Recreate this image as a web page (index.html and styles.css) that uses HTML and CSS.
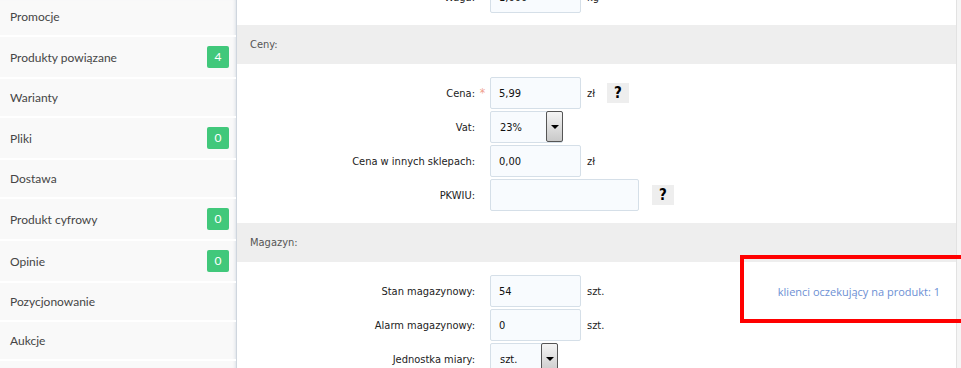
FILE: index.html
```html
<!DOCTYPE html>
<html lang="pl">
<head>
    <meta charset="UTF-8">
    <title>Edycja produktu</title>
    <link rel="stylesheet" href="styles.css">
</head>
<body>
    <aside class="sidebar">
        <ul class="menu">
            <li><a href="#">Promocje</a></li>
            <li class="with-badge"><a href="#">Produkty powiązane</a><span class="badge">4</span></li>
            <li><a href="#">Warianty</a></li>
            <li class="with-badge"><a href="#">Pliki</a><span class="badge">0</span></li>
            <li><a href="#">Dostawa</a></li>
            <li class="with-badge"><a href="#">Produkt cyfrowy</a><span class="badge">0</span></li>
            <li class="with-badge"><a href="#">Opinie</a><span class="badge">0</span></li>
            <li><a href="#">Pozycjonowanie</a></li>
            <li><a href="#">Aukcje</a></li>
        </ul>
    </aside>

    <main class="content">
        <div class="fields top-fields">
            <div class="row">
                <label class="label">Waga:</label>
                <span class="req"></span>
                <input class="input" type="text" value="1,000">
                <span class="unit">kg</span>
            </div>
        </div>

        <div class="section-title">Ceny:</div>
        <div class="fields">
            <div class="row">
                <label class="label">Cena:</label>
                <span class="req">*</span>
                <input class="input" type="text" value="5,99">
                <span class="unit">zł</span>
                <span class="help">?</span>
            </div>
            <div class="row">
                <label class="label">Vat:</label>
                <span class="req"></span>
                <div class="select vat"><span>23%</span><span class="arrow"></span></div>
            </div>
            <div class="row">
                <label class="label">Cena w innych sklepach:</label>
                <span class="req"></span>
                <input class="input" type="text" value="0,00">
                <span class="unit">zł</span>
            </div>
            <div class="row">
                <label class="label">PKWIU:</label>
                <span class="req"></span>
                <input class="input wide" type="text" value="">
                <span class="help help-wide">?</span>
            </div>
        </div>

        <div class="section-title">Magazyn:</div>
        <div class="fields">
            <div class="row">
                <label class="label">Stan magazynowy:</label>
                <span class="req"></span>
                <input class="input" type="text" value="54">
                <span class="unit">szt.</span>
                <a class="waiting" href="#">klienci oczekujący na produkt: 1</a>
            </div>
            <div class="row">
                <label class="label">Alarm magazynowy:</label>
                <span class="req"></span>
                <input class="input" type="text" value="0">
                <span class="unit">szt.</span>
            </div>
            <div class="row">
                <label class="label">Jednostka miary:</label>
                <span class="req"></span>
                <div class="select unit-select"><span>szt.</span><span class="arrow"></span></div>
            </div>
        </div>

        <div class="highlight"></div>
    </main>

    <div class="scroll-edge"></div>
</body>
</html>
```

FILE: styles.css
```css
body {
    margin: 0;
    display: flex;
    height: 368px;
    overflow: hidden;
    background: #fff;
    font-family: "DejaVu Sans Condensed", "DejaVu Sans", Tahoma, sans-serif;
}
.sidebar {
    width: 236px;
    flex-shrink: 0;
    background: #f9f9f9;
    border-right: 1px solid #cfd6de;
    box-shadow: inset -3px 0 3px -2px #dde2e8;
    font-family: Lato, sans-serif;
    font-size: 12px;
    color: #454545;
}
.menu {
    list-style: none;
    margin: -2px 0 0;
    padding: 0;
}
.menu li {
    display: flex;
    align-items: center;
    justify-content: space-between;
    height: 37px;
    padding: 0 7px 0 10px;
    border-bottom: 2px solid #fff;
}
.menu li.with-badge {
    height: 40px;
}
.menu a {
    color: #454545;
    text-decoration: none;
}
.badge {
    width: 22px;
    height: 22px;
    line-height: 22px;
    text-align: center;
    background: #41c87b;
    color: #fff;
    border-radius: 2px;
    font-size: 12px;
}
.content {
    flex: 1;
    position: relative;
    font-size: 11px;
    color: #222;
}
.top-fields {
    margin-top: -19px;
}
.fields {
    display: flex;
    flex-direction: column;
    gap: 2px;
    padding: 13px 0 12px;
}
.top-fields.fields {
    padding: 0 0 12px;
}
.row {
    display: flex;
    align-items: center;
    height: 32px;
}
.label {
    width: 238px;
    text-align: right;
    color: #222;
}
.req {
    width: 15px;
    text-align: center;
    color: #f0a08c;
    font-size: 12px;
}
.input {
    box-sizing: border-box;
    width: 91px;
    height: 32px;
    margin: 0;
    padding: 0 8px;
    border: 1px solid #d5dfe8;
    border-radius: 2px;
    background: #f8fbfe;
    font-family: "DejaVu Sans Condensed", "DejaVu Sans", Tahoma, sans-serif;
    font-size: 11px;
    color: #111;
}
.input.wide {
    width: 149px;
}
.unit {
    margin-left: 6px;
    color: #222;
}
.help {
    width: 22px;
    height: 20px;
    margin-left: 12px;
    background: #eee;
    text-align: center;
    line-height: 20px;
    font-weight: bold;
    font-size: 15px;
    color: #000;
}
.help-wide {
    margin-left: 13px;
}
.select {
    box-sizing: border-box;
    display: flex;
    align-items: center;
    justify-content: space-between;
    height: 32px;
    padding-left: 9px;
    border: 1px solid #d5dfe8;
    border-radius: 2px;
    background: #f8fbfe;
    color: #111;
}
.select.vat {
    width: 73px;
}
.select.unit-select {
    width: 68px;
}
.arrow {
    box-sizing: border-box;
    width: 17px;
    height: 31px;
    margin-right: -1px;
    margin-top: -1px;
    align-self: flex-start;
    border: 1px solid #555;
    border-radius: 2px;
    background: linear-gradient(#f4f4f4, #c9c9c9);
    display: flex;
    align-items: center;
    justify-content: center;
}
.arrow::after {
    content: "";
    border-left: 4px solid transparent;
    border-right: 4px solid transparent;
    border-top: 4px solid #000;
}
.section-title {
    height: 39px;
    line-height: 39px;
    padding-left: 13px;
    background: #eee;
    color: #555;
    font-size: 11px;
}
.waiting {
    margin-left: auto;
    margin-right: 16px;
    font-family: "Open Sans", sans-serif;
    font-size: 11px;
    color: #6c8fd4;
    text-decoration: none;
}
.highlight {
    position: absolute;
    left: 503px;
    top: 255px;
    width: 222px;
    height: 60px;
    border: 4px solid #f00;
}
.scroll-edge {
    width: 4px;
    flex-shrink: 0;
    border-left: 1px solid #e2e2e2;
    background: #f5f5f5;
}
```
